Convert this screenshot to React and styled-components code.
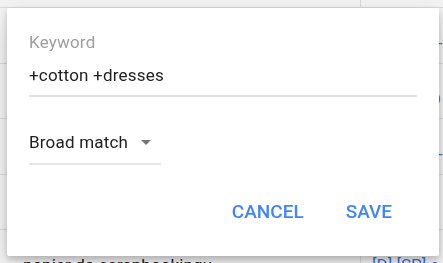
import React from 'react';
import styled, { createGlobalStyle } from 'styled-components';

const GlobalStyle = createGlobalStyle`
  html, body {
    margin: 0;
    padding: 0;
    background: #ffffff;
    font-family: Roboto, 'Liberation Sans', Arial, sans-serif;
    overflow: hidden;
  }
`;

// BACKGROUND TABLE
export const Page = styled.div`
  width: 100%;
  height: 100vh;
  overflow: hidden;
  display: flex;
  flex-direction: column;
`;

export const TableRow = styled.div`
  display: grid;
  grid-template-columns: 360px 1fr;
  height: ${props => (props.header ? '8px' : '55.5px')};
  border-bottom: 1px solid #e4e4e4;
  box-sizing: border-box;
  flex-shrink: 0;
`;

export const NameCell = styled.div`
  padding: 25px 0 0 23px;
  font-size: 17px;
  line-height: 20px;
  letter-spacing: 0.1px;
  color: #212121;
  white-space: nowrap;
  overflow: hidden;
`;

export const TagCell = styled.div`
  border-left: 1px solid #e4e4e4;
  padding: 25px 0 0 11px;
  font-size: 17px;
  line-height: 20px;
  color: #3b78e7;
  white-space: nowrap;
  overflow: hidden;
`;

// DIALOG
export const Scrim = styled.div`
  position: fixed;
  inset: 0;
  background: rgba(0, 0, 0, 0.05);
  display: flex;
  align-items: flex-start;
  padding: 8px 0 0 7px;
`;

export const Dialog = styled.div`
  width: 432px;
  box-sizing: border-box;
  background: #ffffff;
  border-radius: 2px;
  padding: 24px 22px 26px 22px;
  box-shadow: 0 3px 6px rgba(0, 0, 0, 0.2), 0 10px 28px rgba(0, 0, 0, 0.14);
  display: flex;
  flex-direction: column;
`;

export const FieldLabel = styled.div`
  font-size: 17px;
  line-height: 20px;
  letter-spacing: 0.2px;
  color: #9e9e9e;
`;

export const TextField = styled.div`
  margin-top: 13px;
  font-size: 17px;
  line-height: 20px;
  letter-spacing: 0.2px;
  color: #212121;
  padding-bottom: 10px;
  border-bottom: 2px solid #e0e0e0;
`;

export const Select = styled.div`
  margin-top: 35px;
  width: 132px;
  box-sizing: border-box;
  display: flex;
  align-items: center;
  justify-content: space-between;
  padding: 0 10px 11px 0;
  border-bottom: 2px solid #e6e6e6;
  font-size: 17px;
  line-height: 20px;
  letter-spacing: 0.2px;
  color: #212121;
`;

export const Caret = styled.span`
  width: 0;
  height: 0;
  border-left: 5.5px solid transparent;
  border-right: 5.5px solid transparent;
  border-top: 5.5px solid #757575;
  margin-top: 1px;
`;

export const Actions = styled.div`
  margin-top: 29px;
  margin-right: 9px;
  display: flex;
  justify-content: flex-end;
  gap: 10px;
`;

export const FlatButton = styled.button`
  background: none;
  border: 0;
  padding: 0 16px;
  height: 36px;
  line-height: 36px;
  font-family: Roboto, 'Liberation Sans', Arial, sans-serif;
  font-size: 19px;
  font-weight: 500;
  text-transform: uppercase;
  color: #4285f4;
  cursor: pointer;
`;

const rows = [
  { name: 'cotton dresses', tags: '[E] [SP] s-cotton' },
  { name: 'summer dresses', tags: '[B] [SP] D s' },
  { name: 'linen shirts', tags: '[E] [SP] s-linen' },
  { name: 'kraft paper', tags: '[E] [SP] b' },
  { name: 'papier do scrapbookingu', tags: '[D] [SP] s_papier' },
];

export default function App() {
  return (
    <>
      <GlobalStyle />
      <Page>
        <TableRow header>
          <div />
          <TagCell />
        </TableRow>
        {rows.map(row => (
          <TableRow key={row.name}>
            <NameCell>{row.name}</NameCell>
            <TagCell>{row.tags}</TagCell>
          </TableRow>
        ))}
      </Page>
      <Scrim>
        <Dialog>
          <FieldLabel>Keyword</FieldLabel>
          <TextField>+cotton +dresses</TextField>
          <Select>
            <span>Broad match</span>
            <Caret />
          </Select>
          <Actions>
            <FlatButton>Cancel</FlatButton>
            <FlatButton>Save</FlatButton>
          </Actions>
        </Dialog>
      </Scrim>
    </>
  );
}
